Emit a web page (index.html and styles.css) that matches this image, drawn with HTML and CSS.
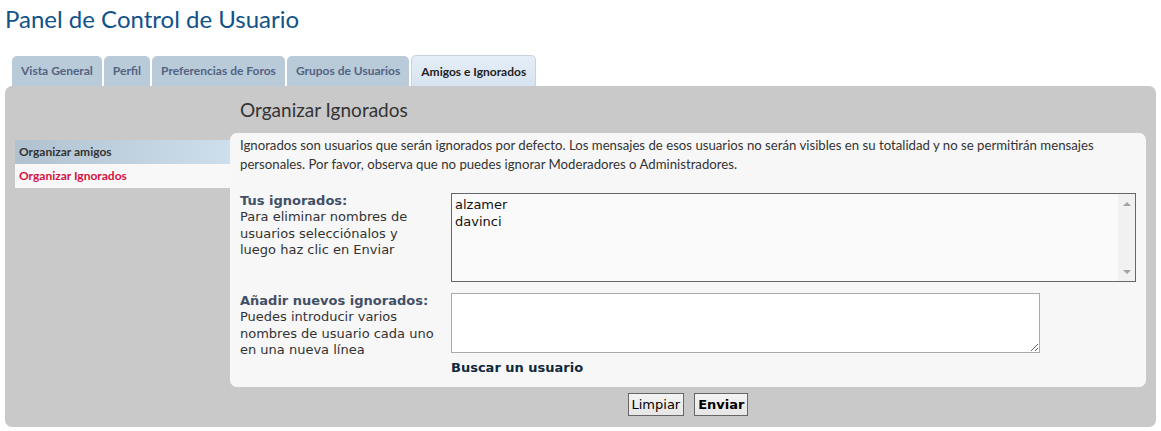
FILE: index.html
```html
<!DOCTYPE html>
<html lang="es">
<head>
<meta charset="utf-8">
<title>Panel de Control de Usuario</title>
<link rel="stylesheet" href="styles.css">
</head>
<body>
<h1 class="page-title">Panel de Control de Usuario</h1>
<ul class="tabs">
  <li class="tab">Vista General</li>
  <li class="tab">Perfil</li>
  <li class="tab">Preferencias de Foros</li>
  <li class="tab">Grupos de Usuarios</li>
  <li class="tab active">Amigos e Ignorados</li>
</ul>
<div class="panel">
  <ul class="side-menu">
    <li class="menu-item">Organizar amigos</li>
    <li class="menu-item current">Organizar Ignorados</li>
  </ul>
  <div class="main">
    <h2 class="section-title">Organizar Ignorados</h2>
    <div class="content-box">
      <p class="intro">Ignorados son usuarios que serán ignorados por defecto. Los mensajes de esos usuarios no serán visibles en su totalidad y no se permitirán mensajes personales. Por favor, observa que no puedes ignorar Moderadores o Administradores.</p>
      <div class="form-row">
        <div class="label"><strong>Tus ignorados:</strong><br>Para eliminar nombres de usuarios selecciónalos y luego haz clic en Enviar</div>
        <div class="listbox">
          <div class="options">
            <div class="option">alzamer</div>
            <div class="option">davinci</div>
          </div>
          <div class="scrollbar">
            <span class="arrow up"></span>
            <span class="arrow down"></span>
          </div>
        </div>
      </div>
      <div class="form-row second">
        <div class="label"><strong>Añadir nuevos ignorados:</strong><br>Puedes introducir varios nombres de usuario cada uno en una nueva línea</div>
        <div class="field">
          <textarea class="names"></textarea>
          <div class="search-link">Buscar un usuario</div>
        </div>
      </div>
    </div>
    <div class="buttons">
      <button class="btn" type="button">Limpiar</button>
      <button class="btn primary" type="button">Enviar</button>
    </div>
  </div>
</div>
</body>
</html>
```

FILE: styles.css
```css
* { box-sizing: border-box; }

body {
  margin: 0;
  padding: 0 5px;
  background: #ffffff;
  font-family: "Lato", "Open Sans", sans-serif;
  color: #333333;
}

.page-title {
  margin: 4px 0 0 0;
  font-size: 24px;
  line-height: 30px;
  font-weight: normal;
  color: #105289;
}

.tabs {
  list-style: none;
  margin: 21px 0 0 7px;
  padding: 0;
  display: flex;
  align-items: flex-end;
  gap: 2px;
  height: 31px;
}

.tab {
  height: 30px;
  line-height: 30px;
  padding: 0 9px;
  font-size: 12px;
  font-weight: bold;
  color: #536482;
  background: #b9cad9;
  border-radius: 5px 5px 0 0;
}

.tab.active {
  height: 31px;
  line-height: 31px;
  color: #222222;
  background: linear-gradient(to bottom, #e6eef7, #d6e4f1);
  border: 1px solid #c4d4e3;
  border-bottom: none;
  padding: 0 9px;
}

.panel {
  background: #c9c9c9;
  border-radius: 7px;
  padding: 12px 10px 11px 10px;
  display: grid;
  grid-template-columns: 215px 1fr;
}

.side-menu {
  list-style: none;
  margin: 42px 0 0 0;
  padding: 0;
}

.menu-item {
  height: 24px;
  line-height: 24px;
  padding-left: 4px;
  font-size: 12px;
  font-weight: bold;
  color: #333333;
}

.menu-item:first-child {
  background: linear-gradient(to right, #b0c1d0, #cddeec);
}

.menu-item.current {
  background: #f8f8f8;
  color: #d31141;
}

.section-title {
  margin: 0 0 11px 10px;
  font-size: 19px;
  line-height: 24px;
  font-weight: normal;
  color: #333333;
}

.content-box {
  background: #f7f7f7;
  border-radius: 7px;
  padding: 3px 10px 10px 10px;
}

.intro {
  margin: 0;
  font-size: 13.2px;
  line-height: 19px;
  color: #333333;
}

.form-row {
  display: flex;
  margin-top: 19px;
  font-family: "DejaVu Sans", "Verdana", sans-serif;
  font-size: 13px;
  line-height: 16.3px;
}

.form-row.second {
  margin-top: 11px;
}

.label {
  width: 195px;
  margin-right: 16px;
  color: #333333;
}

.label strong {
  color: #425067;
}

.listbox {
  flex: 0 0 685px;
  height: 89px;
  border: 1px solid #666666;
  background: #fafafa;
  display: flex;
}

.options {
  flex: 1;
  padding: 2px 3px;
  color: #111111;
  line-height: 17px;
}

.scrollbar {
  width: 17px;
  background: #f1f1f1;
  display: flex;
  flex-direction: column;
  justify-content: space-between;
  align-items: center;
  padding: 8px 0 7px 0;
}

.arrow {
  width: 0;
  height: 0;
  border-left: 4px solid transparent;
  border-right: 4px solid transparent;
}

.arrow.up { border-bottom: 4px solid #a3a3a3; }
.arrow.down { border-top: 4px solid #a3a3a3; }

.field {
  display: flex;
  flex-direction: column;
}

.names {
  width: 589px;
  height: 60px;
  margin: 0;
  border: 1px solid #aaaaaa;
  background: #ffffff;
  display: block;
  font-family: "DejaVu Sans", sans-serif;
  font-size: 13px;
}

.search-link {
  margin-top: 6px;
  font-weight: bold;
  line-height: 18px;
  color: #0f2a3d;
}

.buttons {
  display: flex;
  justify-content: center;
  gap: 10px;
  margin-top: 6px;
}

.btn {
  height: 23px;
  padding: 0 3px;
  border: 1px solid #666666;
  border-radius: 0;
  background: linear-gradient(to bottom, #f4f4f4, #e6e6e6);
  font-family: "DejaVu Sans", sans-serif;
  font-size: 13px;
  color: #000000;
}

.btn.primary {
  font-weight: bold;
}
```
